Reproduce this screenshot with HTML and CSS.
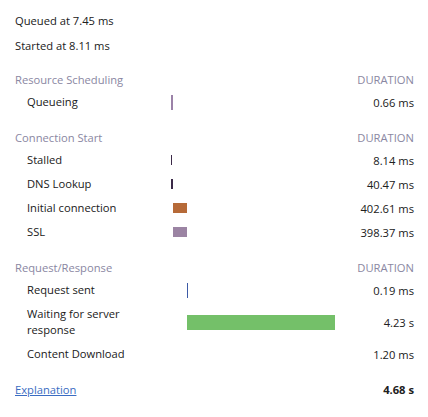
FILE: index.html
```html
<!DOCTYPE html>
<html>
<head>
<meta charset="utf-8">
<link rel="stylesheet" href="styles.css">
</head>
<body>
<div class="timing">
  <div class="meta">Queued at 7.45 ms</div>
  <div class="meta">Started at 8.11 ms</div>

  <div class="section">
    <div class="head"><span class="title">Resource Scheduling</span><span class="dur-h">DURATION</span></div>
    <div class="row"><span class="name">Queueing</span><span class="track"><span class="bar queueing" style="margin-left:0px;width:2px"></span></span><span class="dur">0.66 ms</span></div>
  </div>

  <div class="section">
    <div class="head"><span class="title">Connection Start</span><span class="dur-h">DURATION</span></div>
    <div class="row"><span class="name">Stalled</span><span class="track"><span class="bar stalled" style="margin-left:0px;width:1px"></span></span><span class="dur">8.14 ms</span></div>
    <div class="row"><span class="name">DNS Lookup</span><span class="track"><span class="bar dns" style="margin-left:0px;width:2px"></span></span><span class="dur">40.47 ms</span></div>
    <div class="row"><span class="name">Initial connection</span><span class="track"><span class="bar connecting" style="margin-left:2px;width:14px"></span></span><span class="dur">402.61 ms</span></div>
    <div class="row"><span class="name">SSL</span><span class="track"><span class="bar ssl" style="margin-left:2px;width:14px"></span></span><span class="dur">398.37 ms</span></div>
  </div>

  <div class="section">
    <div class="head"><span class="title">Request/Response</span><span class="dur-h">DURATION</span></div>
    <div class="row"><span class="name">Request sent</span><span class="track"><span class="bar sending" style="margin-left:16px;width:1px"></span></span><span class="dur">0.19 ms</span></div>
    <div class="row tall"><span class="name">Waiting for server response</span><span class="track"><span class="bar waiting" style="margin-left:16px;width:148px"></span></span><span class="dur">4.23 s</span></div>
    <div class="row"><span class="name">Content Download</span><span class="track"><span class="bar receiving" style="margin-left:164px;width:1px"></span></span><span class="dur">1.20 ms</span></div>
  </div>

  <div class="foot"><a class="link" href="#">Explanation</a><span class="total">4.68 s</span></div>
</div>
</body>
</html>
```

FILE: styles.css
```css
html, body {
  margin: 0;
  padding: 0;
  background: #ffffff;
}
body {
  font-family: "Open Sans", "Noto Sans", sans-serif;
  font-size: 11.2px;
  color: #202020;
}
.timing {
  padding: 8px 14px 0 15px;
  display: flex;
  flex-direction: column;
}
.meta {
  height: 24px;
  line-height: 24px;
  margin-bottom: 1px;
  padding-top: 1px;
  box-sizing: border-box;
}
.section {
  margin-top: 10px;
  display: flex;
  flex-direction: column;
}
.section + .section {
  margin-top: 12px;
}
.head {
  height: 22px;
  display: flex;
  align-items: center;
  justify-content: space-between;
  color: #8a87a2;
}
.row {
  height: 24px;
  display: grid;
  grid-template-columns: 156px 164px 1fr;
  align-items: center;
}
.row.tall {
  height: 40px;
}
.name {
  padding-left: 12px;
  line-height: 16px;
  padding-right: 12px;
}
.track {
  display: flex;
  align-items: center;
  height: 100%;
}
.bar {
  display: block;
  height: 10px;
}
.dur {
  text-align: right;
}
.queueing { background: #9b82a8; height: 15px; }
.stalled { background: #3b2a48; }
.dns { background: #3b2a48; }
.connecting { background: #b66a38; }
.ssl { background: #9b84a3; }
.sending { background: #3c5aa6; height: 15px; }
.waiting { background: #74c069; height: 15px; }
.receiving { background: #3c5aa6; height: 15px; }
.foot {
  margin-top: 11px;
  height: 24px;
  display: flex;
  align-items: center;
  justify-content: space-between;
}
.link {
  color: #3a6cc2;
  text-decoration: underline;
}
.total {
  font-weight: bold;
}
```
